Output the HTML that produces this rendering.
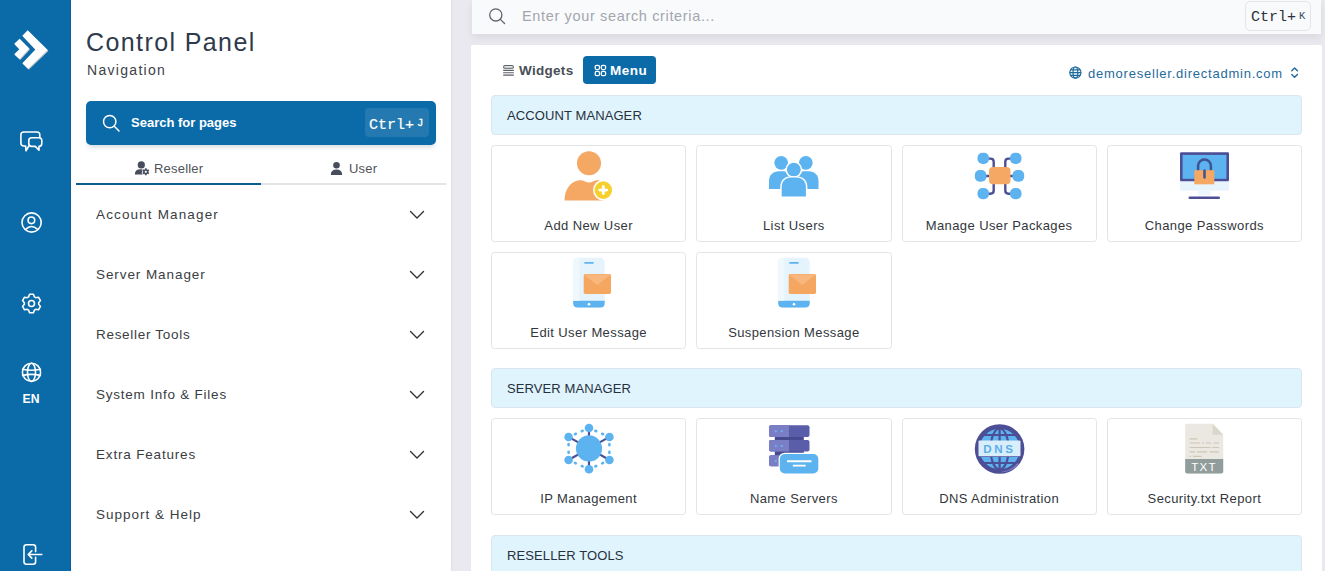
<!DOCTYPE html>
<html><head><meta charset="utf-8">
<style>
*{box-sizing:border-box;margin:0;padding:0}
html,body{width:1325px;height:571px;overflow:hidden;background:#e9e9ef;font-family:"Liberation Sans",sans-serif}
.rail{position:absolute;left:0;top:0;width:71px;height:571px;background:#0b6aa8;border-right:1px solid #0a5c92}
.rail svg{position:absolute}
.nav{position:absolute;left:71px;top:0;width:380px;height:571px;background:#fff;box-shadow:1px 0 2px rgba(0,0,0,.05)}
.abs{position:absolute;white-space:nowrap}
.title{left:15px;top:28px;font-size:25px;color:#2f3a4c;letter-spacing:1.4px}
.subtitle{left:16px;top:62px;font-size:14px;color:#3d4148;letter-spacing:1.3px}
.sbtn{position:absolute;left:15px;top:101px;width:350px;height:44px;background:#0b6aa8;border-radius:5px;box-shadow:0 4px 5px -2px rgba(0,40,80,.18)}
.sbtn .t{left:45px;top:14px;color:#fff;font-weight:700;font-size:13px}
.sbtn .k{position:absolute;left:279px;top:7px;width:64px;height:29px;background:rgba(255,255,255,.1);border-radius:4px}
.tabs{position:absolute;left:5px;top:155px;width:370px;height:30px}
.tabline{position:absolute;left:0;top:28px;width:370px;height:2px;background:#e4e4e7}
.tabact{position:absolute;left:0;top:28px;width:185px;height:2px;background:#0d5c8c}
.item{position:absolute;left:25px;font-size:13.5px;color:#3a3d42;letter-spacing:1px}
.chev{position:absolute;left:337.5px}
.tl{font-size:13px;color:#4f535a;letter-spacing:0.2px}
.topbar{position:absolute;left:472px;top:0;width:849px;height:34px;background:#f9fafc;box-shadow:0 4px 8px rgba(0,0,0,.07)}
.main{position:absolute;left:471px;top:45px;width:851px;height:540px;background:#fff;border-radius:2px}
.hdr{position:absolute;left:20px;width:811px;height:40px;background:#e0f4fd;border:1px solid #dae5ee;border-radius:4px}
.hdr span{position:absolute;left:15px;top:12px;font-size:13px;color:#27303d;letter-spacing:0.1px}
.card{position:absolute;width:195.25px;height:97px;border:1px solid #e4e4e6;border-radius:3.5px;background:#fff}
.card .lbl{position:absolute;left:0;right:0;top:72px;text-align:center;font-size:13px;color:#33373d;letter-spacing:0.4px;white-space:nowrap}
.card svg{position:absolute;left:72px;top:4px;overflow:visible}
</style></head><body>
<div class="rail"><svg width="71" height="571" viewBox="0 0 71 571" style="left:0;top:0">
<g fill="#b9c3cc" transform="translate(0.7,0.9)">
<polygon points="22.3,35.7 27.7,30.3 47.7,50 28.1,68.8 22.3,63.2 35.4,49.6"/>
<polygon points="14.2,43.8 19.6,38.8 29.3,48.6 19.6,59.2 14.2,54.2 19.4,49.2"/>
</g>
<g fill="#fff">
<polygon points="22.3,35.7 27.7,30.3 47.7,50 28.1,68.8 22.3,63.2 35.4,49.6"/>
<polygon points="14.2,43.8 19.6,38.8 29.3,48.6 19.6,59.2 14.2,54.2 19.4,49.2"/>
</g>
<g fill="none" stroke="#fff" stroke-width="1.6" stroke-linejoin="round" stroke-linecap="round">
<path d="M28.8,146 L26,150.8 L25.6,146 H23.9 Q20.9,146 20.9,143 V134.8 Q20.9,132 23.7,132 H36.9 Q39.8,132 39.8,134.8 V137.6"/>
<path d="M31.6,137.7 H39 Q41.8,137.7 41.8,140.5 V143.6 Q41.8,146.4 39,146.4 V150.2 L35.3,146.4 H31.6 Q28.8,146.4 28.8,143.6 V140.5 Q28.8,137.7 31.6,137.7 Z"/>
<circle cx="31.6" cy="222.5" r="9.6"/>
<circle cx="31.4" cy="220.3" r="3.3"/>
<path d="M25.6,229.4 Q31.5,223.6 37.6,229.4"/>
<path d="M28.57,296.92 L29.55,294.31 L33.45,294.31 L34.43,296.92 L35.73,297.68 L38.49,297.21 L40.44,300.60 L38.66,302.75 L38.66,304.25 L40.44,306.40 L38.49,309.79 L35.73,309.32 L34.43,310.08 L33.45,312.69 L29.55,312.69 L28.57,310.08 L27.27,309.32 L24.51,309.79 L22.56,306.40 L24.34,304.25 L24.34,302.75 L22.56,300.60 L24.51,297.21 L27.27,297.68Z"/>
<circle cx="31.5" cy="303.5" r="3"/>
<circle cx="31.5" cy="372.3" r="9.1"/>
<ellipse cx="31.5" cy="372.3" rx="4" ry="9.1"/>
<path d="M22.6,369.2 Q31.5,371.2 40.4,369.2 M22.6,375.4 Q31.5,373.4 40.4,375.4"/>
<path d="M35.6,551.6 V547.3 Q35.6,544.8 33.1,544.8 H26.5 Q24,544.8 24,547.3 V561.8 Q24,564.3 26.5,564.3 H33.1 Q35.6,564.3 35.6,561.8 V557.3"/>
<path d="M28.2,554.5 H41.8 M31.8,550.9 L28.2,554.5 L31.8,558.1"/>
</g>
<text x="31" y="403" text-anchor="middle" fill="#fff" font-family="Liberation Sans" font-weight="700" font-size="12.2">EN</text>
</svg></div>
<div class="nav">
  <div class="abs title">Control Panel</div>
  <div class="abs subtitle">Navigation</div>
  <div class="sbtn">
    <svg class="abs" style="left:0;top:0" width="350" height="44" viewBox="86 101 350 44"><g fill="none" stroke="#fff" stroke-width="1.5" stroke-linecap="round"><circle cx="109.7" cy="121.6" r="6.2"/><path d="M114.3,126.3 L119,131"/></g></svg>
    <div class="abs t">Search for pages</div>
    <div class="k"><span class="abs" style="left:4px;top:9px;font-family:'Liberation Mono';font-size:15px;color:#fff;-webkit-text-stroke:0.2px #fff">Ctrl+</span><span class="abs" style="left:52px;top:9px;font-family:'Liberation Mono';font-size:10.5px;color:#fff;-webkit-text-stroke:0.3px #fff">J</span></div>
  </div>
  <div class="tabs">
    <div class="tabline"></div><div class="tabact"></div>
    <svg class="abs" style="left:0;top:0" width="370" height="30" viewBox="76 155 370 30"><g fill="#474d5c">
      <circle cx="141.3" cy="164.9" r="3.6"/><path d="M134.8,174.6 Q134.8,169.2 140.5,169.2 H143.5 V174.6 Z"/>
      <path d="M144.83,169.39 L144.99,168.29 L146.61,168.29 L146.77,169.39 L147.40,169.75 L148.43,169.34 L149.24,170.75 L148.37,171.44 L148.37,172.16 L149.24,172.85 L148.43,174.26 L147.40,173.85 L146.77,174.21 L146.61,175.31 L144.99,175.31 L144.83,174.21 L144.20,173.85 L143.17,174.26 L142.36,172.85 L143.23,172.16 L143.23,171.44 L142.36,170.75 L143.17,169.34 L144.20,169.75Z" stroke="#fff" stroke-width="1.3" stroke-linejoin="round"/><path d="M144.83,169.39 L144.99,168.29 L146.61,168.29 L146.77,169.39 L147.40,169.75 L148.43,169.34 L149.24,170.75 L148.37,171.44 L148.37,172.16 L149.24,172.85 L148.43,174.26 L147.40,173.85 L146.77,174.21 L146.61,175.31 L144.99,175.31 L144.83,174.21 L144.20,173.85 L143.17,174.26 L142.36,172.85 L143.23,172.16 L143.23,171.44 L142.36,170.75 L143.17,169.34 L144.20,169.75Z"/><circle cx="145.8" cy="171.8" r="1.1" fill="#fff"/>
      <circle cx="336.5" cy="165.3" r="3.3"/><path d="M330.8,175 Q330.8,169.5 336.5,169.5 Q342.2,169.5 342.2,175 Z"/>
    </g></svg>
    <span class="abs tl" style="left:78px;top:6px">Reseller</span>
    <span class="abs tl" style="left:273px;top:6px">User</span>
  </div>
  <div class="abs item" style="top:207px;letter-spacing:1.14px">Account Manager</div>
  <div class="abs item" style="top:267px;letter-spacing:0.92px">Server Manager</div>
  <div class="abs item" style="top:327px;letter-spacing:0.7px">Reseller Tools</div>
  <div class="abs item" style="top:387px;letter-spacing:0.77px">System Info &amp; Files</div>
  <div class="abs item" style="top:447px;letter-spacing:0.82px">Extra Features</div>
  <div class="abs item" style="top:507px;letter-spacing:1.0px">Support &amp; Help</div>
  <svg class="chev" style="top:208px" width="16" height="12" viewBox="0 0 16 12"><path d="M1.5,3.5 L8,10 L14.5,3.5" fill="none" stroke="#333" stroke-width="1.4" stroke-linecap="round" stroke-linejoin="round"/></svg><svg class="chev" style="top:268px" width="16" height="12" viewBox="0 0 16 12"><path d="M1.5,3.5 L8,10 L14.5,3.5" fill="none" stroke="#333" stroke-width="1.4" stroke-linecap="round" stroke-linejoin="round"/></svg><svg class="chev" style="top:328px" width="16" height="12" viewBox="0 0 16 12"><path d="M1.5,3.5 L8,10 L14.5,3.5" fill="none" stroke="#333" stroke-width="1.4" stroke-linecap="round" stroke-linejoin="round"/></svg><svg class="chev" style="top:388px" width="16" height="12" viewBox="0 0 16 12"><path d="M1.5,3.5 L8,10 L14.5,3.5" fill="none" stroke="#333" stroke-width="1.4" stroke-linecap="round" stroke-linejoin="round"/></svg><svg class="chev" style="top:448px" width="16" height="12" viewBox="0 0 16 12"><path d="M1.5,3.5 L8,10 L14.5,3.5" fill="none" stroke="#333" stroke-width="1.4" stroke-linecap="round" stroke-linejoin="round"/></svg><svg class="chev" style="top:508px" width="16" height="12" viewBox="0 0 16 12"><path d="M1.5,3.5 L8,10 L14.5,3.5" fill="none" stroke="#333" stroke-width="1.4" stroke-linecap="round" stroke-linejoin="round"/></svg>
</div>
<div class="topbar">
  <svg class="abs" style="left:0;top:0" width="849" height="34" viewBox="472 0 849 34"><g fill="none" stroke="#60646c" stroke-width="1.3" stroke-linecap="round"><circle cx="495.8" cy="14.9" r="6.1"/><path d="M500.3,19.4 L504.6,23.5"/></g></svg>
  <span class="abs" style="left:50px;top:7.5px;font-size:14.5px;color:#a3a6ad;letter-spacing:0.65px">Enter your search criteria...</span>
  <div class="abs" style="left:773px;top:1px;width:66px;height:30px;border:1px solid #e3e5ea;border-radius:5px;background:#f9fafc">
    <span class="abs" style="left:5px;top:7px;font-family:'Liberation Mono';font-size:15px;color:#2c313a">Ctrl+</span><span class="abs" style="left:53px;top:8px;font-family:'Liberation Mono';font-size:10.5px;color:#34495e">K</span>
  </div>
</div>
<div class="main">
  <svg class="abs" style="left:0;top:0;z-index:2" width="851" height="50" viewBox="471 45 851 50">
    <g fill="none" stroke="#5b5f66" stroke-width="1.1"><rect x="503.6" y="65.5" width="9.8" height="2.8" rx="1.4" fill="#e6e6e8"/><path d="M503.2,70.4 H513.8 M503.2,72.7 H513.8 M503.2,75.1 H513.8"/></g>
    <g fill="none" stroke="#fff" stroke-width="1.3"><rect x="595.2" y="65.3" width="4.3" height="4.3" rx="1.5"/><rect x="601.3" y="65.3" width="4.3" height="4.3" rx="1.5"/><rect x="595.2" y="71.4" width="4.3" height="4.3" rx="1.5"/><rect x="601.3" y="71.4" width="4.3" height="4.3" rx="1.5"/></g>
    <g fill="none" stroke="#1f6a9c" stroke-width="1.2"><circle cx="1075.4" cy="72.6" r="5.6"/><ellipse cx="1075.4" cy="72.6" rx="2.4" ry="5.6"/><path d="M1069.8,72.6 H1081 M1070.6,69.8 H1080.2 M1070.6,75.4 H1080.2"/></g>
    <g fill="none" stroke="#1f6a9c" stroke-width="1.4" stroke-linecap="round" stroke-linejoin="round"><path d="M1291.8,70.8 L1294.6,68 L1297.4,70.8 M1291.8,74.4 L1294.6,77.2 L1297.4,74.4"/></g>
  </svg>
  <span class="abs" style="left:48px;top:17.5px;font-size:13.5px;font-weight:700;color:#4a4f57;letter-spacing:0.3px">Widgets</span>
  <div class="abs" style="left:112px;top:11px;width:73px;height:28px;background:#0b6aa8;border-radius:4px"></div>
  <span class="abs" style="left:139px;top:17.5px;font-size:13.5px;font-weight:700;color:#fff;letter-spacing:0.5px">Menu</span>
  <span class="abs" style="left:617px;top:21px;font-size:13px;color:#1f6a9c;letter-spacing:0.77px">demoreseller.directadmin.com</span>
  <div class="hdr" style="top:50px"><span>ACCOUNT MANAGER</span></div>
  <div class="card" style="left:20px;top:100px"><svg width="50" height="52" viewBox="0 0 50 52"><circle cx="25" cy="13.3" r="12" fill="#f5a764"/>
<clipPath id="cbody"><rect x="0" y="0" width="39.3" height="52"/></clipPath><path clip-path="url(#cbody)" d="M0.5,50.5 C0.6,39 7,30.8 16,30.3 C20,30.1 22,32.6 25,32.6 C28,32.6 30,30.1 34,30.3 C43,30.8 49.4,39 49.5,50.5 Z" fill="#f5a764"/>
<circle cx="39.3" cy="40.1" r="10.3" fill="#fff"/>
<circle cx="39.3" cy="40.1" r="8.8" fill="#f6d12e"/>
<path d="M39.3,36.6 V43.6 M35.8,40.1 H42.8" stroke="#fff" stroke-width="2.8" stroke-linecap="round"/></svg><div class="lbl">Add New User</div></div>
  <div class="card" style="left:225.25px;top:100px"><svg width="50" height="52" viewBox="0 0 50 52"><circle cx="12.2" cy="12.8" r="6.9" fill="#5db3ef"/>
<circle cx="36.8" cy="12.8" r="6.9" fill="#5db3ef"/>
<path d="M0,39 V31 C0,25 4,21.2 10,21.2 H14 C20,21.2 24,25 24,31 V39 Z" fill="#5db3ef"/>
<path d="M25,39 V31 C25,25 29,21.2 35,21.2 H39.5 C45.5,21.2 49.5,25 49.5,31 V39 Z" fill="#5db3ef"/>
<circle cx="24.8" cy="19.6" r="8.4" fill="#fff"/>
<circle cx="24.8" cy="19.6" r="6.9" fill="#5db3ef"/>
<path d="M11.2,47.8 V37 C11.2,30.5 15.5,26.2 22,26.2 H27.5 C34,26.2 38.4,30.5 38.4,37 V47.8 Z" fill="#fff"/>
<path d="M12.7,46.4 V37 C12.7,31.5 16.5,27.6 22,27.6 H27.5 C33,27.6 36.9,31.5 36.9,37 V46.4 Z" fill="#5db3ef"/></svg><div class="lbl">List Users</div></div>
  <div class="card" style="left:430.5px;top:100px"><svg width="50" height="52" viewBox="0 0 50 52"><g fill="none" stroke="#4c4f96" stroke-width="2.4">
<path d="M13,8.6 H15.5 Q18.7,8.6 18.7,11.8 V18"/><path d="M36,8.6 H33.5 Q30.3,8.6 30.3,11.8 V18"/>
<path d="M13,43.7 H15.5 Q18.7,43.7 18.7,40.5 V34"/><path d="M36,43.7 H33.5 Q30.3,43.7 30.3,40.5 V34"/>
<path d="M10.5,26 H15 M34,26 H38.5"/></g>
<rect x="14" y="17" width="21.5" height="17.3" rx="4" fill="#f5a764"/>
<g fill="#5db3ef"><rect x="2.5" y="2.8" width="11.5" height="11.2" rx="5"/><rect x="35" y="2.8" width="11.5" height="11.2" rx="5"/>
<rect x="-0.2" y="20" width="11.6" height="11.7" rx="5"/><rect x="37.5" y="20" width="11.7" height="11.7" rx="5"/>
<rect x="2.5" y="38" width="11.5" height="11.2" rx="5"/><rect x="35" y="38" width="11.5" height="11.2" rx="5"/></g></svg><div class="lbl">Manage User Packages</div></div>
  <div class="card" style="left:635.75px;top:100px"><svg width="50" height="52" viewBox="0 0 50 52"><rect x="0" y="31" width="49" height="9.6" fill="#e8f4fb"/>
<rect x="18" y="40.5" width="13" height="5" fill="#eef7fc"/>
<rect x="0" y="2.3" width="49" height="29" rx="1.2" fill="#4c4f96"/>
<rect x="2.6" y="4.9" width="43.8" height="23.9" fill="#5db3ef"/>
<rect x="8.5" y="46.4" width="31.5" height="2.7" rx="1.35" fill="#4c4f96"/>
<path d="M18.1,21 V15.9 A6.4,6.4 0 0 1 30.9,15.9 V21" fill="none" stroke="#3e5494" stroke-width="2.5"/>
<rect x="14.3" y="20.2" width="20" height="14.1" fill="#f5a764"/>
<path d="M24.5,20.5 V27.6" stroke="#3e5494" stroke-width="2.5" stroke-linecap="round"/></svg><div class="lbl">Change Passwords</div></div>
  <div class="card" style="left:20px;top:207px"><svg width="50" height="52" viewBox="0 0 50 52"><rect x="9.2" y="0.7" width="31.5" height="49.9" rx="4.5" fill="#e4f3fc"/>
<path d="M9.2,43.8 H40.7 V46.1 Q40.7,50.6 36.2,50.6 H13.7 Q9.2,50.6 9.2,46.1 Z" fill="#5db3ef"/>
<path d="M13.7,0.7 H15.5 V43.8 H9.2 V5.2 Q9.2,0.7 13.7,0.7 Z" fill="#eef8fd"/>
<circle cx="25" cy="47.3" r="1.3" fill="#fff"/>
<rect x="20.3" y="5.1" width="9.4" height="1.7" rx="0.6" fill="#5db3ef"/>
<rect x="19.7" y="17" width="27.3" height="20" rx="1.8" fill="#f5a660"/>
<path d="M19.9,17.6 L33.3,28 L46.8,17.6" fill="#f8b77c"/></svg><div class="lbl">Edit User Message</div></div>
  <div class="card" style="left:225.25px;top:207px"><svg width="50" height="52" viewBox="0 0 50 52"><rect x="9.2" y="0.7" width="31.5" height="49.9" rx="4.5" fill="#e4f3fc"/>
<path d="M9.2,43.8 H40.7 V46.1 Q40.7,50.6 36.2,50.6 H13.7 Q9.2,50.6 9.2,46.1 Z" fill="#5db3ef"/>
<path d="M13.7,0.7 H15.5 V43.8 H9.2 V5.2 Q9.2,0.7 13.7,0.7 Z" fill="#eef8fd"/>
<circle cx="25" cy="47.3" r="1.3" fill="#fff"/>
<rect x="20.3" y="5.1" width="9.4" height="1.7" rx="0.6" fill="#5db3ef"/>
<rect x="19.7" y="17" width="27.3" height="20" rx="1.8" fill="#f5a660"/>
<path d="M19.9,17.6 L33.3,28 L46.8,17.6" fill="#f8b77c"/></svg><div class="lbl">Suspension Message</div></div>
  <div class="hdr" style="top:323px"><span>SERVER MANAGER</span></div>
  <div class="card" style="left:20px;top:373px"><svg width="50" height="52" viewBox="0 0 50 52"><g stroke="#4c4f96" stroke-width="2.2"><path d="M25,25.4 V4.9 M25,25.4 V46.4 M25,25.4 L4.5,13.9 M25,25.4 L45.5,13.9 M25,25.4 L4.5,37 M25,25.4 L45.5,37"/></g>
<path d="M31.34,7.80 L32.26,8.20 M38.14,10.80 L39.06,11.20 M45.40,21.17 L45.40,22.17 M45.40,28.83 L45.40,29.83 M39.05,39.89 L38.15,40.31 M32.25,42.99 L31.35,43.41 M18.65,43.41 L17.75,42.99 M11.85,40.31 L10.95,39.89 M4.60,29.83 L4.60,28.83 M4.60,22.17 L4.60,21.17 M10.94,11.20 L11.86,10.80 M17.74,8.20 L18.66,7.80" fill="none" stroke="#5db3ef" stroke-width="2.6" stroke-linecap="round"/>
<circle cx="25" cy="25.4" r="13.1" fill="#5db3ef"/>
<g fill="#5db3ef"><circle cx="25" cy="5" r="4.3"/><circle cx="25" cy="46.3" r="4.3"/><circle cx="4.6" cy="14" r="4.3"/><circle cx="45.4" cy="14" r="4.3"/><circle cx="4.6" cy="37" r="4.3"/><circle cx="45.4" cy="37" r="4.3"/></g></svg><div class="lbl">IP Management</div></div>
  <div class="card" style="left:225.25px;top:373px"><svg width="50" height="52" viewBox="0 0 50 52"><g fill="#474a8f"><rect x="5.8" y="13" width="29" height="5"/><rect x="5.8" y="27.6" width="29" height="5.5"/></g>
<g fill="#5a5eaa"><rect x="0" y="2.3" width="40.5" height="11.6" rx="2"/><rect x="0" y="17" width="40.5" height="11.6" rx="2"/><rect x="0" y="32.2" width="40.5" height="11" rx="2"/></g>
<g fill="#7a7ec4"><path d="M2,2.3 H20 V13.9 H2 Q0,13.9 0,11.9 V4.3 Q0,2.3 2,2.3Z"/><path d="M2,17 H20 V28.6 H2 Q0,28.6 0,26.6 V19 Q0,17 2,17Z"/><path d="M2,32.2 H20 V43.2 H2 Q0,43.2 0,41.2 V34.2 Q0,32.2 2,32.2Z"/></g>
<g fill="#66b9f0"><circle cx="6.8" cy="8.3" r="1.1"/><circle cx="12.8" cy="8.3" r="1.1"/><circle cx="6.8" cy="23" r="1.1"/><circle cx="12.8" cy="23" r="1.1"/><circle cx="6.8" cy="38" r="1.1"/></g>
<rect x="9.6" y="29.8" width="40.8" height="21.7" rx="6" fill="#fff"/>
<rect x="10.8" y="31" width="38.5" height="19.4" rx="5" fill="#5db3ef"/>
<path d="M18,38.3 H42.5 M23.8,42.6 H36.7" stroke="#fff" stroke-width="1.9"/></svg><div class="lbl">Name Servers</div></div>
  <div class="card" style="left:430.5px;top:373px"><svg width="50" height="52" viewBox="0 0 50 52"><circle cx="24.6" cy="26" r="24.8" fill="#4c4f96"/>
<path d="M44,41 Q37,49 26,49.5 L28,47 Q37,46 42,40 Z" fill="#7c7fc6"/>
<circle cx="24.6" cy="26" r="20.5" fill="#5db3ef"/>
<g fill="none" stroke="#4c4f96" stroke-width="2.2"><ellipse cx="24.6" cy="26" rx="9" ry="20.5"/><path d="M24.6,5.5 V46.5 M5,19 H44.2 M5,33 H44.2 M8,12 H41 M8,40 H41"/></g>
<circle cx="24.6" cy="26" r="21.5" fill="none" stroke="#4c4f96" stroke-width="2.6"/>
<rect x="3.5" y="17.5" width="42" height="15.8" rx="1" fill="#d9eefb"/>
<text x="24.4" y="29.6" text-anchor="middle" font-family="Liberation Sans" font-weight="700" font-size="11.6" letter-spacing="2.6" fill="#5aaeea">DNS</text></svg><div class="lbl">DNS Administration</div></div>
  <div class="card" style="left:635.75px;top:373px"><svg width="50" height="52" viewBox="0 0 50 52"><path d="M6.7,0.7 H32.7 L43.2,11.8 V48.6 Q43.2,50.6 41.2,50.6 H7.2 Q5.2,50.6 5.2,48.6 V2.2 Q5.2,0.7 6.7,0.7 Z" fill="#ebe8e1"/>
<path d="M32.7,0.7 V11.8 H43.2 Z" fill="#dad6ca"/>
<path d="M5.2,36 H43.2 V48.6 Q43.2,50.6 41.2,50.6 H7.2 Q5.2,50.6 5.2,48.6 Z" fill="#909d9a"/>
<g stroke="#cdc6b9" stroke-width="1.2"><path d="M9.6,15.8 H17.5 M9.6,20 H20 M22,20 H24 M26,20 H31 M33.5,20 H39 M9.6,24.5 H30.5 M32,24.5 H39 M9.6,28.8 H15 M17,28.8 H27 M29.5,28.8 H39 M9.6,33.4 H11 M13,33.4 H21.5"/></g>
<text x="24" y="48" text-anchor="middle" font-family="Liberation Sans" font-size="11.6" letter-spacing="1.2" fill="#fff">TXT</text></svg><div class="lbl">Security.txt Report</div></div>
  <div class="hdr" style="top:490px"><span>RESELLER TOOLS</span></div>
</div>
</body></html>
